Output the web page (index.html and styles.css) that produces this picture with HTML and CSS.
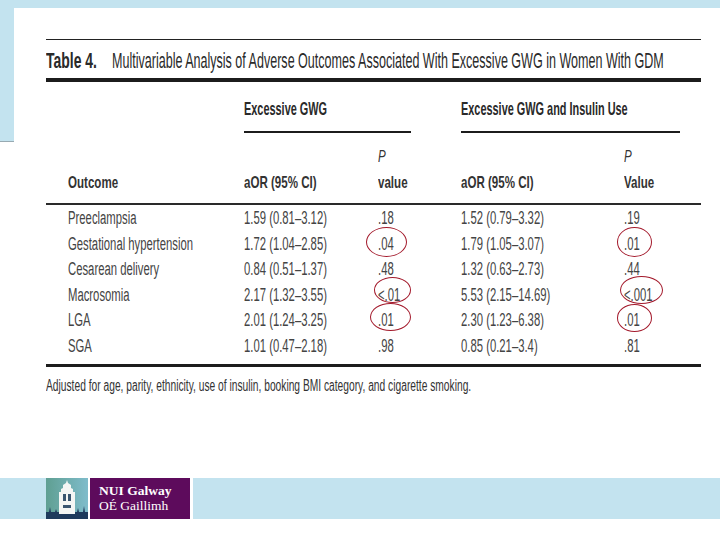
FILE: index.html
```html
<!DOCTYPE html>
<html>
<head>
<meta charset="utf-8">
<link rel="stylesheet" href="styles.css">
</head>
<body>
<div class="page">
  <div class="topbar"></div>
  <div class="content">
    <div class="side"></div>
    <div class="figure">
      <div class="title">
        <div class="tlabel"><span class="sx">Table 4.</span></div>
        <div class="ttext"><span class="sx">Multivariable Analysis of Adverse Outcomes Associated With Excessive GWG in Women With GDM</span></div>
      </div>
      <div class="grid groups">
        <div class="g1"><span class="sx">Excessive GWG</span></div>
        <div class="g2"><span class="sx">Excessive GWG and Insulin Use</span></div>
      </div>
      <div class="grid heads">
        <div class="c1"><span class="sx">Outcome</span></div>
        <div class="c2"><span class="sx">aOR (95% CI)</span></div>
        <div class="c3"><span class="sx"><i>P</i><br>value</span></div>
        <div class="c4"><span class="sx">aOR (95% CI)</span></div>
        <div class="c5"><span class="sx"><i>P</i><br>Value</span></div>
      </div>
      <div class="grid body">
        <div class="c1"><span class="sx">Preeclampsia</span></div>
        <div class="c2"><span class="sx">1.59 (0.81–3.12)</span></div>
        <div class="c3"><span class="sx">.18</span></div>
        <div class="c4"><span class="sx">1.52 (0.79–3.32)</span></div>
        <div class="c5"><span class="sx">.19</span></div>

        <div class="c1"><span class="sx">Gestational hypertension</span></div>
        <div class="c2"><span class="sx">1.72 (1.04–2.85)</span></div>
        <div class="c3"><span class="sx">.04</span></div>
        <div class="c4"><span class="sx">1.79 (1.05–3.07)</span></div>
        <div class="c5"><span class="sx">.01</span></div>

        <div class="c1"><span class="sx">Cesarean delivery</span></div>
        <div class="c2"><span class="sx">0.84 (0.51–1.37)</span></div>
        <div class="c3"><span class="sx">.48</span></div>
        <div class="c4"><span class="sx">1.32 (0.63–2.73)</span></div>
        <div class="c5"><span class="sx">.44</span></div>

        <div class="c1"><span class="sx">Macrosomia</span></div>
        <div class="c2"><span class="sx">2.17 (1.32–3.55)</span></div>
        <div class="c3"><span class="sx">&lt;.01</span></div>
        <div class="c4"><span class="sx">5.53 (2.15–14.69)</span></div>
        <div class="c5"><span class="sx">&lt;.001</span></div>

        <div class="c1"><span class="sx">LGA</span></div>
        <div class="c2"><span class="sx">2.01 (1.24–3.25)</span></div>
        <div class="c3"><span class="sx">.01</span></div>
        <div class="c4"><span class="sx">2.30 (1.23–6.38)</span></div>
        <div class="c5"><span class="sx">.01</span></div>

        <div class="c1"><span class="sx">SGA</span></div>
        <div class="c2"><span class="sx">1.01 (0.47–2.18)</span></div>
        <div class="c3"><span class="sx">.98</span></div>
        <div class="c4"><span class="sx">0.85 (0.21–3.4)</span></div>
        <div class="c5"><span class="sx">.81</span></div>
      </div>
      <div class="note"><span class="sx">Adjusted for age, parity, ethnicity, use of insulin, booking BMI category, and cigarette smoking.</span></div>

      <div class="ring r1"></div>
      <div class="ring r2"></div>
      <div class="ring r3"></div>
      <div class="ring r4"></div>
      <div class="ring r5"></div>
      <div class="ring r6"></div>
    </div>
  </div>
  <div class="band">
    <div class="logo">
      <svg class="crest" width="42" height="41" viewBox="0 0 42 41">
        <defs>
          <linearGradient id="bg" x1="0" y1="0" x2="1" y2="0">
            <stop offset="0" stop-color="#5f9f92"/>
            <stop offset="1" stop-color="#7fbccb"/>
          </linearGradient>
        </defs>
        <rect width="42" height="41" fill="url(#bg)"/>
        <path d="M21 2 L22 5 L25 7 L25 10 L27 11 L27 14 L29 14 L29 36 L13 36 L13 14 L15 14 L15 11 L17 10 L17 7 L20 5 Z" fill="#f4f6f4"/>
        <rect x="17" y="16" width="3" height="7" fill="#3a5670"/>
        <rect x="22" y="16" width="3" height="7" fill="#3a5670"/>
        <rect x="17" y="27" width="8" height="3" fill="#3a5670"/>
        <path d="M0 41 L0 34 L3 34 L4 29 L5 34 L9 34 L10 31 L11 34 L13 34 L13 36 L29 36 L29 34 L31 34 L32 30 L33 34 L37 34 L38 28 L39 34 L42 34 L42 41 Z" fill="#1e3a5c"/>
      </svg>
      <div class="brand">
        <div class="b1">NUI Galway</div>
        <div class="b2">OÉ Gaillimh</div>
      </div>
    </div>
  </div>
</div>
</body>
</html>
```

FILE: styles.css
```css
* { box-sizing: border-box; }
body {
  margin: 0;
  background: #ffffff;
  font-family: "Liberation Sans", Arial, sans-serif;
}
.page {
  width: 720px;
  height: 540px;
  overflow: hidden;
  background: #ffffff;
}
.topbar {
  height: 8px;
  background: #c3e3ef;
}
.content {
  display: flex;
  height: 470px;
}
.side {
  width: 14px;
  height: 134px;
  background: #c3e3ef;
  border-bottom: 1px solid #98aab2;
  flex: none;
}
.figure {
  position: relative;
  margin-left: 32px;
  margin-top: 31px;
  width: 655px;
  color: #3c3c3c;
}
.sx {
  display: inline-block;
  white-space: nowrap;
  transform-origin: 0 50%;
  transform: scaleX(0.628);
}
.title {
  display: flex;
  border-top: 1px solid #222;
  border-bottom: 4px solid #1c1c1c;
  height: 43px;
  padding-top: 6px;
  font-size: 22px;
  line-height: 30px;
  color: #2a2a2a;
}
.tlabel {
  width: 66px;
  font-weight: bold;
}
.tlabel .sx { transform: scaleX(0.634); }
.ttext .sx { transform: scaleX(0.57); }

.grid {
  display: grid;
  grid-template-columns: 22px 176px 134px 83px 163px 77px;
}
.groups {
  height: 51px;
  padding-top: 16px;
  font-size: 19px;
  line-height: 22px;
  font-weight: bold;
  color: #2a2a2a;
}
.groups .sx { transform: scaleX(0.574); }
.g1 {
  grid-column: 3 / 5;
  width: 167px;
  height: 35px;
  border-bottom: 2px solid #1c1c1c;
}
.g2 {
  grid-column: 5 / 7;
  width: 219px;
  height: 35px;
  border-bottom: 2px solid #1c1c1c;
}
.heads {
  height: 72px;
  padding-top: 11px;
  font-size: 17px;
  line-height: 26px;
  font-weight: bold;
  color: #333;
  border-bottom: 2px solid #2a2a2a;
  align-items: end;
  padding-bottom: 10px;
}
.heads .sx { transform: scaleX(0.68); }
.heads i { font-weight: normal; }
.c1 { grid-column: 2; }
.c2 { grid-column: 3; }
.c3 { grid-column: 4; }
.c4 { grid-column: 5; }
.c5 { grid-column: 6; }
.body {
  grid-auto-rows: 25.6px;
  font-size: 18px;
  line-height: 25.6px;
  padding-top: 1px;
  padding-bottom: 4px;
  border-bottom: 3px solid #1c1c1c;
  color: #444;
}
.note {
  font-size: 16px;
  line-height: 20px;
  padding-top: 9px;
  color: #333;
}
.note .sx { transform: scaleX(0.64); }

.ring {
  position: absolute;
  border: 1px solid #a3192b;
  border-radius: 50%;
}
.r1 { left: 320px; top: 188px; width: 41px; height: 30px; }
.r2 { left: 571px; top: 188px; width: 35px; height: 30px; }
.r3 { left: 328px; top: 238px; width: 37px; height: 26px; }
.r4 { left: 324px; top: 264px; width: 41px; height: 28px; }
.r5 { left: 574px; top: 237px; width: 43px; height: 28px; }
.r6 { left: 571px; top: 265px; width: 35px; height: 28px; }

.band {
  height: 41px;
  background: #c3e3ef;
  display: flex;
  padding-left: 46px;
}
.logo {
  display: flex;
  gap: 2px;
  background: #ffffff;
  padding-right: 3px;
}
.crest { display: block; }
.brand {
  width: 100px;
  background: #5d0b5c;
  color: #ffffff;
  font-family: "Liberation Serif", serif;
  padding: 5px 0 0 9px;
}
.b1 {
  font-weight: bold;
  font-size: 13.5px;
  line-height: 15px;
}
.b2 {
  font-size: 13.5px;
  line-height: 16px;
}
```
